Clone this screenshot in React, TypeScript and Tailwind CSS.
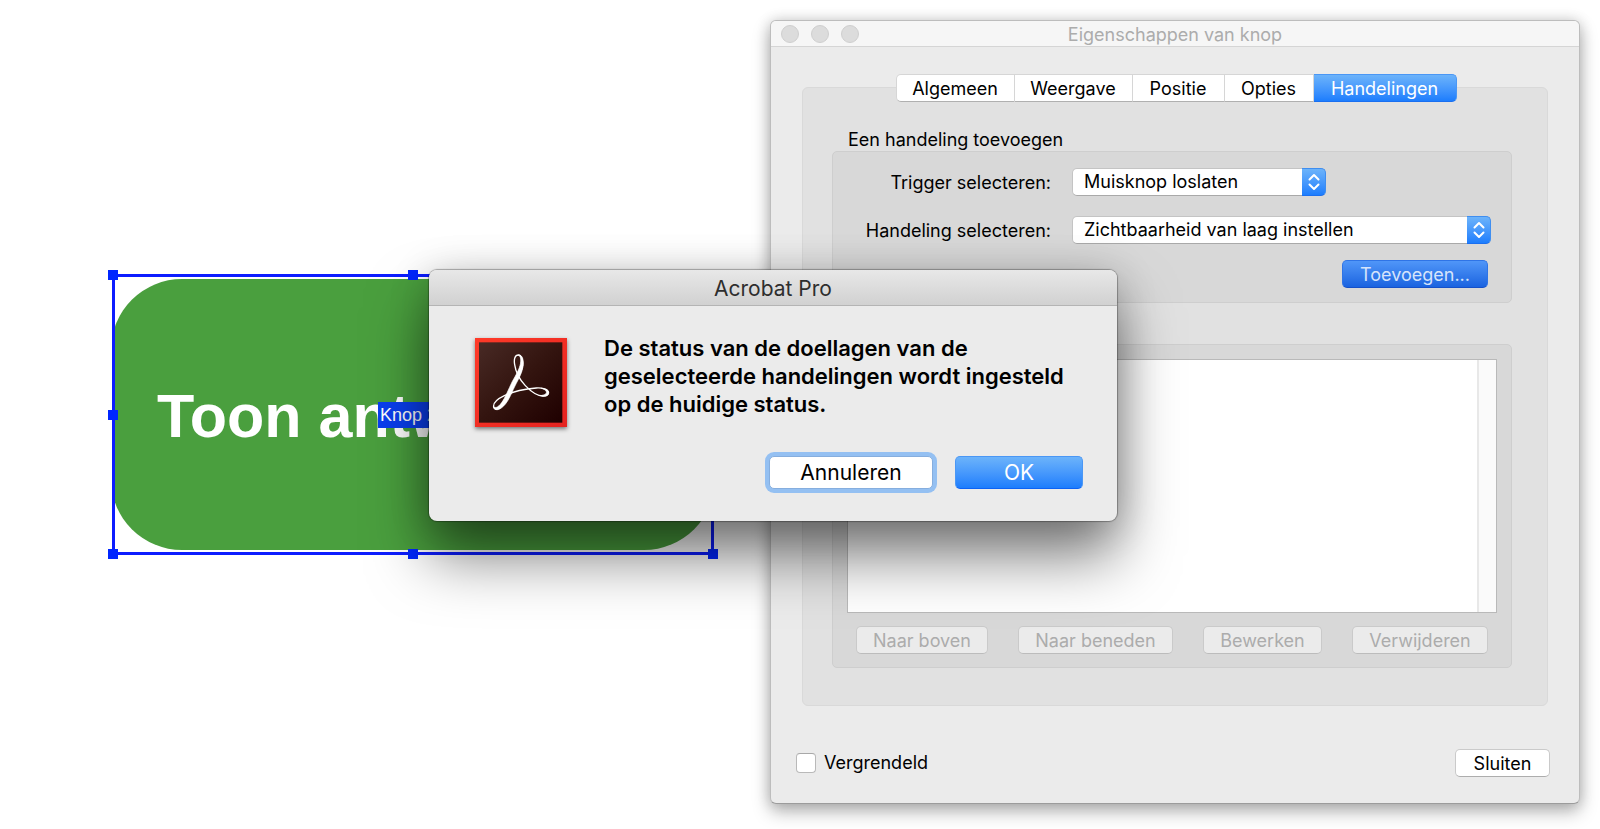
import { useState } from "react";
import type { ReactNode } from "react";

const tabs = [
  { label: "Algemeen", width: "w-[119px]" },
  { label: "Weergave", width: "w-[118px]" },
  { label: "Positie", width: "w-[92px]" },
  { label: "Opties", width: "w-[89px]" },
  { label: "Handelingen", width: "w-[143px]" },
];

const listActions = [
  { label: "Naar boven", width: "w-[132px]" },
  { label: "Naar beneden", width: "w-[155px]" },
  { label: "Bewerken", width: "w-[119px]" },
  { label: "Verwijderen", width: "w-[136px]" },
];

const handles = [
  "-left-[7px] -top-[7px]",
  "left-1/2 -top-[7px] -translate-x-1/2",
  "-right-[7px] -top-[7px]",
  "-left-[7px] top-1/2 -translate-y-1/2",
  "-right-[7px] top-1/2 -translate-y-1/2",
  "-left-[7px] -bottom-[7px]",
  "left-1/2 -bottom-[7px] -translate-x-1/2",
  "-right-[7px] -bottom-[7px]",
];

function Popup({ id, label, value, className }: { id: string; label: string; value: string; className: string }) {
  return (
    <>
      <label htmlFor={id} className="pt-0.5 text-right leading-[26px]">
        {label}
      </label>
      <div className={`relative h-7 ${className}`}>
        <select
          id={id}
          className="block h-7 w-full appearance-none rounded-[5px] border border-[#c4c4c4] border-b-[#a9a9a9] bg-white pl-[11px] pr-8 text-black"
        >
          <option>{value}</option>
        </select>
        <span className="pointer-events-none absolute inset-y-0 right-0 flex w-6 items-center justify-center rounded-r-[5px] border border-l-0 border-[#3f8ef0] border-b-[#1a6ff0] bg-linear-to-b from-[#6cb3fa] to-[#1c7dfd]">
          <svg width="12" height="18" viewBox="0 0 12 18" fill="none" stroke="white" strokeWidth="2" strokeLinecap="round" strokeLinejoin="round">
            <path d="M1.5 6.5 6 2l4.500 4.500M1.500 11.500 6 16l4.500-4.500" />
          </svg>
        </span>
      </div>
    </>
  );
}

function Group({ children, className }: { children: ReactNode; className: string }) {
  return <div className={`rounded-[5px] border border-[#cecece] bg-[#d8d8d8] ${className}`}>{children}</div>;
}

function AcrobatIcon() {
  return (
    <svg
      className="h-[89px] w-[92px] shrink-0 drop-shadow-[0_2px_2px_rgba(0,0,0,0.5)]"
      viewBox="0 0 276 267"
      fill="none"
      role="img"
      aria-label="Acrobat"
    >
      <defs>
        <linearGradient id="acroBg" x1="0" y1="0" x2="1" y2="1">
          <stop offset="0" stopColor="#482a25" />
          <stop offset="0.5" stopColor="#33140f" />
          <stop offset="1" stopColor="#1f0000" />
        </linearGradient>
        <linearGradient id="acroEdge" x1="0" y1="0" x2="1" y2="1">
          <stop offset="0" stopColor="#ff3a28" />
          <stop offset="1" stopColor="#e42320" />
        </linearGradient>
      </defs>
      <rect width="276" height="267" fill="url(#acroEdge)" />
      <rect x="12" y="13" width="250" height="241" fill="url(#acroBg)" />
      <path
        d="M143 82C144 65 139 51 130 51C120 51 116 64 119 80C122 102 135 126 151 143C168 161 187 174 204 174C214 174 220 170 220 164C220 154 203 149 184 150C153 152 116 160 88 173C67 183 54 196 56 207C58 217 71 216 83 203C99 186 112 151 124 127C134 108 141 97 143 82Z"
        stroke="white"
        strokeWidth="4"
      />
      <path
        d="M130 51C142 50 147 65 144 86C140 111 127 127 115 154C104 180 92 204 74 213C66 217 57 215 56 207C67 213 78 199 88 181C99 161 108 135 120 116C130 98 139 80 137 63C136 56 134 53 130 51Z"
        fill="white"
        stroke="white"
        strokeWidth="2"
      />
      <path d="M199 151C216 153 223 159 221 166C219 174 209 177 196 173C209 171 216 167 214 161C212 156 206 153 199 151Z" fill="white" stroke="white" strokeWidth="2" />
    </svg>
  );
}

function FormField() {
  return (
    <div className="absolute left-[112px] top-[274px] h-[281px] w-[602px] border-[3px] border-[#0d1dff]">
      <div className="h-full overflow-hidden py-0.5">
        <button
          type="button"
          className="-mx-1 block h-full w-[604px] rounded-[71px] bg-[#4a9f3e] pl-[46px] pt-0.5 text-left text-[61px] font-bold text-white [font-family:'Liberation_Sans',Arial,sans-serif]"
        >
          Toon antwoord
        </button>
      </div>
      <span className="absolute left-[263px] top-[125px] h-[26px] w-[68px] bg-[#0a3ff0] pl-0.5 text-lg leading-[26px] text-white [font-family:'Liberation_Sans',Arial,sans-serif]">
        Knop 2
      </span>
      {handles.map((position) => (
        <span key={position} className={`absolute size-[10px] bg-[#0026ff] ${position}`} />
      ))}
    </div>
  );
}

function PropertiesWindow() {
  const [active, setActive] = useState("Handelingen");

  return (
    <section className="absolute right-5 top-5 w-[810px] rounded-[6px] border border-[#bdbdbd] border-b-[#9c9c9c] bg-[#ebebeb] shadow-[0_8px_18px_rgba(0,0,0,0.28),0_0_14px_rgba(0,0,0,0.16)]">
      <header className="flex h-[26px] items-center rounded-t-[5px] border-b border-[#d5d5d5] bg-[#f6f6f6] px-[10px]">
        <div className="flex flex-1 gap-3">
          <span className="size-[18px] rounded-full border border-[#cfcfcf] bg-[#dcdcdc]" />
          <span className="size-[18px] rounded-full border border-[#cfcfcf] bg-[#dcdcdc]" />
          <span className="size-[18px] rounded-full border border-[#cfcfcf] bg-[#dcdcdc]" />
        </div>
        <h1 className="pt-0.5 text-[#acacac]">Eigenschappen van knop</h1>
        <div className="flex-1" />
      </header>

      <div className="px-[31px] pt-[27px]">
        <div role="tablist" className="relative z-10 -mb-[15px] flex justify-center pl-0.5">
          {tabs.map((tab) => (
            <button
              key={tab.label}
              type="button"
              role="tab"
              aria-selected={tab.label === active}
              onClick={() => setActive(tab.label)}
              className={`h-7 border-y border-r pt-0.5 first:rounded-l-[5px] first:border-l last:rounded-r-[5px] ${tab.width} ${
                tab.label === active
                  ? "border-[#4a97f5] border-b-[#1a6ff0] bg-linear-to-b from-[#6cb3fa] to-[#1c7dfd] text-white"
                  : "border-[#d6d6d6] border-b-[#b0b0b0] bg-white"
              }`}
            >
              {tab.label}
            </button>
          ))}
        </div>

        <div className="rounded-[6px] border border-[#d9d9d9] bg-[#e1e1e1] pb-[37px] pl-[29px] pr-[35px] pt-10">
          <h2 className="-mb-px pl-4 leading-6">Een handeling toevoegen</h2>
          <Group className="pb-[14px] pt-4">
            <div className="grid grid-cols-[218px_1fr] gap-x-[21px] gap-y-5 pr-5">
              <Popup id="trigger" label="Trigger selecteren:" value="Muisknop loslaten" className="w-[254px]" />
              <Popup id="action" label="Handeling selecteren:" value="Zichtbaarheid van laag instellen" className="w-full" />
            </div>
            <div className="mt-4 flex justify-end pr-[23px]">
              <button
                type="button"
                className="h-7 w-[146px] rounded-[5px] border border-[#2f74e6] border-b-[#1550c8] bg-linear-to-b from-[#5096f8] to-[#1a63e0] pt-0.5 text-[#d6e4fb]"
              >
                Toevoegen...
              </button>
            </div>
          </Group>

          <Group className="mt-[41px] px-[14px] pb-[13px] pt-[14px]">
            <div className="flex h-[254px] justify-end border border-[#b9b9b9] bg-white">
              <div className="w-[19px] border-l-2 border-[#e8e8e8] bg-[#fafafa]" />
            </div>
            <div className="mt-[13px] flex justify-between px-[9px]">
              {listActions.map((action) => (
                <button
                  key={action.label}
                  type="button"
                  disabled
                  className={`h-7 rounded-[5px] border border-[#cacaca] border-b-[#bcbcbc] bg-[#ebebeb] pt-0.5 text-[#acacac] ${action.width}`}
                >
                  {action.label}
                </button>
              ))}
            </div>
          </Group>
        </div>
      </div>

      <footer className="mt-[43px] flex items-center justify-between pb-[26px] pl-[25px] pr-[29px]">
        <label className="flex items-center gap-2">
          <input
            type="checkbox"
            className="size-5 appearance-none rounded-[4px] border border-[#b9b9b9] border-t-[#a8a8a8] bg-white checked:bg-[#1c7dfd]"
          />
          Vergrendeld
        </label>
        <button type="button" className="h-7 w-[95px] rounded-[5px] border border-[#cacaca] border-b-[#adadad] bg-white pt-0.5">
          Sluiten
        </button>
      </footer>
    </section>
  );
}

function AcrobatDialog() {
  return (
    <div
      role="dialog"
      aria-labelledby="dialog-title"
      className="absolute left-[429px] top-[270px] w-[688px] rounded-[8px] bg-[#ebebeb] text-[21px] shadow-[0_0_1px_1px_rgba(0,0,0,0.3),0_36px_60px_rgba(0,0,0,0.5),0_4px_40px_rgba(0,0,0,0.2)]"
    >
      <header className="flex h-9 items-center justify-center rounded-t-[8px] border-b border-[#b4b4b4] bg-linear-to-b from-[#e8e8e8] to-[#d1d1d1]">
        <h2 id="dialog-title" className="pt-0.5 text-[#2e2e2e]">
          Acrobat Pro
        </h2>
      </header>
      <div className="px-[34px] pb-8 pt-7">
        <div className="flex gap-[37px] pl-3">
          <div className="pt-1">
            <AcrobatIcon />
          </div>
          <p className="text-[22px] font-semibold leading-7">
            De status van de doellagen van de
            <br />
            geselecteerde handelingen wordt ingesteld
            <br />
            op de huidige status.
          </p>
        </div>
        <div className="mt-[29px] flex justify-end gap-[22px]">
          <button type="button" className="h-[33px] w-[164px] rounded-[5px] border border-[#86aede] bg-white ring-4 ring-[#94c0f2]">
            Annuleren
          </button>
          <button
            type="button"
            className="h-[33px] w-[128px] rounded-[5px] border border-[#4a97f5] border-b-[#0d62f5] bg-linear-to-b from-[#6cb3fa] to-[#1c7dfd] text-white"
          >
            OK
          </button>
        </div>
      </div>
    </div>
  );
}

export default function App() {
  return (
    <main className="relative min-h-screen overflow-hidden bg-white text-lg leading-6 text-black [font-family:Inter,'Liberation_Sans',sans-serif]">
      <FormField />
      <PropertiesWindow />
      <AcrobatDialog />
    </main>
  );
}
